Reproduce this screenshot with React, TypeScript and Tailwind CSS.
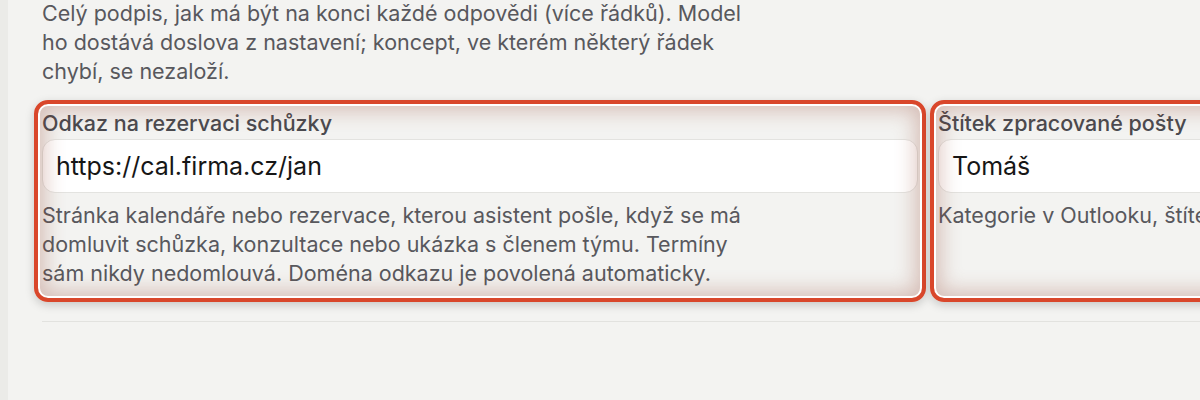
import React from 'react'

type Field = {
  label: string
  value: string
  hint: string
}

const fields: Field[] = [
  {
    label: 'Odkaz na rezervaci schůzky',
    value: 'https://cal.firma.cz/jan',
    hint: 'Stránka kalendáře nebo rezervace, kterou asistent pošle, když se má domluvit schůzka, konzultace nebo ukázka s členem týmu. Termíny sám nikdy nedomlouvá. Doména odkazu je povolená automaticky.',
  },
  {
    label: 'Štítek zpracované pošty',
    value: 'Tomáš',
    hint: 'Kategorie v Outlooku, štítek v Gmailu.',
  },
]

function Highlighted({ field }: { field: Field }) {
  return (
    <div className="relative w-[876px] shrink-0">
      <label className="block text-[21.5px] leading-[26px] font-medium text-[#4a4a4f]">{field.label}</label>
      <input
        readOnly
        value={field.value}
        className="mt-[3px] block h-[54px] w-full rounded-[13px] border border-[#e3e3e0] bg-white px-[13px] text-[25px] text-[#161616] outline-none"
      />
      <p className="mt-[8px] max-w-[720px] text-[21.5px] leading-[29px] text-[#58585d]">{field.hint}</p>
      <div className="pointer-events-none absolute -top-[10px] -bottom-[14px] -left-[8px] -right-[8px] rounded-[14px] border-4 border-[#d9472b] shadow-[inset_0_0_0_2px_#ffffff,inset_0_0_20px_7px_rgba(150,70,50,0.3),0_3px_10px_rgba(0,0,0,0.18)]" />
    </div>
  )
}

export default function App() {
  return (
    <div className="flex h-[400px] w-[1200px] overflow-hidden font-['Inter','Noto_Sans',sans-serif]">
      <div className="w-2 shrink-0 bg-[#ebebe8]" />
      <main className="flex-1 overflow-hidden bg-[#f3f3f1] pl-[34px]">
        <p className="-mt-px max-w-[720px] text-[21.5px] leading-[29px] text-[#58585d]">
          Celý podpis, jak má být na konci každé odpovědi (více řádků). Model ho dostává doslova z nastavení; koncept, ve kterém některý řádek chybí, se nezaloží.
        </p>
        <div className="mt-[24px] flex gap-[20px]">
          {fields.map((f) => (
            <Highlighted key={f.label} field={f} />
          ))}
        </div>
        <div className="mt-[33px] h-px bg-[#e2e2df]" />
      </main>
    </div>
  )
}
